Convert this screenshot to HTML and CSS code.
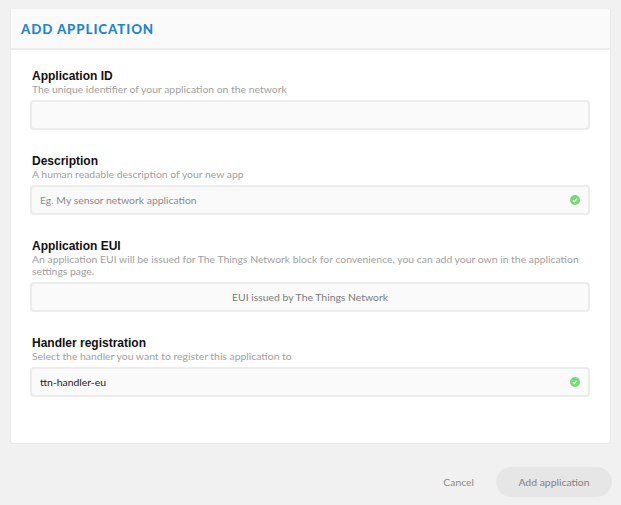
FILE: index.html
```html
<!DOCTYPE html>
<html>
<head>
<meta charset="utf-8">
<link rel="stylesheet" href="styles.css">
</head>
<body>
<div class="page">
  <div class="card">
    <div class="card-header">
      <h1 class="title">ADD APPLICATION</h1>
    </div>
    <div class="card-body">
      <div class="field">
        <div class="label">Application ID</div>
        <div class="desc">The unique identifier of your application on the network</div>
        <div class="input"></div>
      </div>
      <div class="field">
        <div class="label">Description</div>
        <div class="desc">A human readable description of your new app</div>
        <div class="input">
          <span class="placeholder">Eg. My sensor network application</span>
          <span class="ok"><svg width="10" height="10" viewBox="0 0 10 10"><circle cx="5" cy="5" r="5" fill="#72dd72"/><path d="M3 5.2 L4.4 6.5 L7 3.8" fill="none" stroke="#fff" stroke-width="1.3"/></svg></span>
        </div>
      </div>
      <div class="field">
        <div class="label">Application EUI</div>
        <div class="desc">An application EUI will be issued for The Things Network block for convenience, you can add your own in the application settings page.</div>
        <div class="input input-center"><span class="eui">EUI issued by The Things Network</span></div>
      </div>
      <div class="field">
        <div class="label">Handler registration</div>
        <div class="desc">Select the handler you want to register this application to</div>
        <div class="input">
          <span class="value">ttn-handler-eu</span>
          <span class="ok"><svg width="10" height="10" viewBox="0 0 10 10"><circle cx="5" cy="5" r="5" fill="#72dd72"/><path d="M3 5.2 L4.4 6.5 L7 3.8" fill="none" stroke="#fff" stroke-width="1.3"/></svg></span>
        </div>
      </div>
    </div>
  </div>
  <div class="actions">
    <span class="cancel">Cancel</span>
    <span class="btn">Add application</span>
  </div>
</div>
</body>
</html>
```
FILE: styles.css
```css
html, body {
  margin: 0;
  padding: 0;
  background: #f1f1f1;
}
body {
  font-family: Lato, "Liberation Sans", sans-serif;
}
.page {
  padding: 8px 10px 0 10px;
}
.card {
  background: #fff;
  border-radius: 3px;
  border: 1px solid #e8e8e8;
  border-top-color: #f0f0f0;
  box-sizing: border-box;
  height: 436px;
}
.card-header {
  background: #fafafa;
  height: 39px;
  border-bottom: 2px solid #ececec;
  display: flex;
  align-items: center;
  padding-left: 10px;
  border-radius: 3px 3px 0 0;
}
.title {
  margin: 0;
  font-family: Lato, sans-serif;
  font-weight: 900;
  font-size: 13.3px;
  letter-spacing: 0.9px;
  color: #1d86d3;
}
.card-body {
  padding: 20px 20px 0 19px;
}
.field {
  margin-bottom: 25px;
}
.label {
  font-family: "Liberation Sans", Arial, sans-serif;
  font-weight: bold;
  font-size: 12px;
  line-height: 13px;
  color: #111;
  padding-left: 2px;
}
.desc {
  font-family: Lato, sans-serif;
  font-size: 10.4px;
  line-height: 12px;
  color: #a0a0a0;
  padding-left: 2px;
  margin-bottom: 5px;
}
.input {
  box-sizing: border-box;
  height: 30px;
  background: #fafafa;
  border: 2px solid #ececec;
  border-radius: 4px;
  display: flex;
  align-items: center;
  padding: 0 8px 0 8px;
  font-size: 10.4px;
}
.input-center {
  justify-content: center;
}
.placeholder {
  color: #8a8a8a;
  flex: 1;
}
.value {
  color: #222;
  flex: 1;
}
.eui {
  color: #7a7a7a;
}
.ok {
  display: flex;
}
.actions {
  display: flex;
  justify-content: flex-end;
  align-items: center;
  margin-top: 23px;
  margin-right: -1px;
  gap: 22px;
}
.cancel {
  font-size: 10.4px;
  color: #8a8a8a;
}
.btn {
  background: #e6e6e6;
  color: #808080;
  font-size: 10.4px;
  height: 30px;
  line-height: 30px;
  width: 116px;
  border-radius: 15px;
  text-align: center;
  white-space: nowrap;
}
```
